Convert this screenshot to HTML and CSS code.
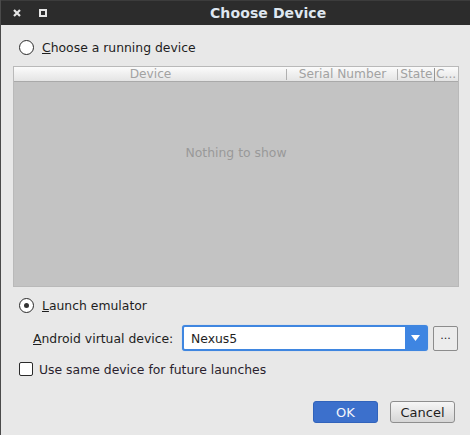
FILE: index.html
```html
<!DOCTYPE html>
<html>
<head>
<meta charset="utf-8">
<link rel="stylesheet" href="styles.css">
</head>
<body>
<div class="window">
  <div class="titlebar">
    <div class="tb-buttons">
      <svg class="tb-close" width="10" height="10" viewBox="0 0 10 10"><path d="M2 2 L8 8 M8 2 L2 8" stroke="#e6e6e6" stroke-width="2.2"/></svg>
      <svg class="tb-max" width="10" height="10" viewBox="0 0 10 10"><rect x="2" y="2" width="6" height="6" fill="none" stroke="#e6e6e6" stroke-width="2"/></svg>
    </div>
    <div class="title">Choose Device</div>
  </div>
  <div class="content">
    <label class="radio-row first">
      <span class="radio"></span>
      <span class="label"><u>C</u>hoose a running device</span>
    </label>
    <div class="table">
      <div class="thead">
        <div class="th c-device">Device</div>
        <div class="th c-serial">Serial Number</div>
        <div class="th c-state">State</div>
        <div class="th c-c">C...</div>
      </div>
      <div class="tbody">Nothing to show</div>
    </div>
    <label class="radio-row second">
      <span class="radio checked"></span>
      <span class="label"><u>L</u>aunch emulator</span>
    </label>
    <div class="avd-row">
      <span class="avd-label"><u>A</u>ndroid virtual device:</span>
      <div class="combo">
        <span class="combo-text">Nexus5</span>
        <span class="combo-arrow"><svg width="9" height="6" viewBox="0 0 9 6"><path d="M0 0 H9 L4.5 6 Z" fill="#fff"/></svg></span>
      </div>
      <div class="dots">...</div>
    </div>
    <label class="check-row">
      <span class="checkbox"></span>
      <span class="label">Use same device for future launches</span>
    </label>
    <div class="buttons">
      <button class="btn ok">OK</button>
      <button class="btn cancel">Cancel</button>
    </div>
  </div>
</div>
</body>
</html>
```
FILE: styles.css
```css
* { box-sizing: border-box; }
html, body { margin: 0; padding: 0; }
body {
  width: 470px;
  height: 435px;
  background: #e8e8e8;
  font-family: "DejaVu Sans", sans-serif;
  font-size: 12.4px;
  color: #1e1e1e;
  overflow: hidden;
}
.window {
  width: 470px;
  height: 435px;
  border-left: 1px solid #4a4a4a;
  display: flex;
  flex-direction: column;
}
.titlebar {
  height: 25px;
  background: #2c2c2c;
  border-top: 1px solid #3c3c3c;
  display: flex;
  align-items: center;
  position: relative;
}
.tb-buttons {
  display: flex;
  gap: 16px;
  padding-left: 11px;
  align-items: center;
}
.tb-buttons svg { display: block; }
.title {
  position: absolute;
  left: 209px;
  top: 4px;
  font-weight: bold;
  font-size: 14px;
  color: #dfe7f0;
  letter-spacing: 0.1px;
}
.content {
  flex: 1;
  display: flex;
  flex-direction: column;
  padding: 0 12px 0 12px;
}
.radio-row, .check-row {
  display: flex;
  align-items: center;
  gap: 8px;
  padding-left: 6px;
  height: 18px;
}
.radio-row.first { margin-top: 13px; }
.radio {
  width: 15px;
  height: 15px;
  border: 1px solid #2a2a2a;
  border-radius: 50%;
  background: #fff;
  display: flex;
  align-items: center;
  justify-content: center;
}
.radio.checked::after {
  content: "";
  width: 5px;
  height: 5px;
  border-radius: 50%;
  background: #333;
}
.label u, .avd-label u { text-decoration: underline; text-underline-offset: 1px; }
.table {
  margin-top: 10px;
  width: 446px;
  height: 221px;
  border: 1px solid #b9b9b9;
  display: flex;
  flex-direction: column;
}
.thead {
  height: 15px;
  display: flex;
  background: linear-gradient(#fbfbfb, #e4e4e4);
  border-bottom: 1px solid #a9a9a9;
  color: #a2a2a2;
  font-size: 12.2px;
  line-height: 14px;
}
.th {
  text-align: center;
  white-space: nowrap;
  overflow: hidden;
  position: relative;
}
.c-device::after, .c-serial::after, .c-state::after {
  content: "";
  position: absolute;
  right: 0;
  top: 2px;
  bottom: 1px;
  width: 1px;
  background: #b0b0b0;
}
.c-state::after { background: #959595; top: 1px; bottom: 0; }
.c-device { width: 273px; }
.c-serial { width: 111px; }
.c-state { width: 37px; }
.c-c { flex: 1; text-align: left; padding-left: 1px; }
.tbody {
  flex: 1;
  background: #c3c3c3;
  color: #999999;
  display: flex;
  justify-content: center;
  padding-top: 63px;
}
.radio-row.second { margin-top: 9px; }
.avd-row {
  display: flex;
  align-items: center;
  height: 26px;
  margin-top: 11px;
}
.avd-label { padding-left: 20px; width: 169px; }
.combo {
  width: 246px;
  height: 26px;
  border: 2px solid #3f86e0;
  border-radius: 3px;
  background: #fff;
  display: flex;
  align-items: center;
  box-shadow: 0 0 1px #8fb8ee;
}
.combo-text { flex: 1; padding-left: 7px; }
.combo-arrow {
  width: 21px;
  height: 100%;
  background: #3e85e2;
  display: flex;
  align-items: center;
  justify-content: center;
}
.combo-arrow svg { display: block; }
.dots {
  margin-left: 5px;
  width: 25px;
  height: 25px;
  border: 1px solid #8c8c8c;
  border-radius: 2px;
  background: #ececec;
  font-size: 11px;
  text-align: center;
  line-height: 17px;
}
.check-row { margin-top: 9px; gap: 6px; }
.checkbox {
  width: 14px;
  height: 14px;
  border: 1px solid #2a2a2a;
  border-radius: 2px;
  background: #fff;
}
.check-row .label { color: #2a1f2e; }
.buttons {
  display: flex;
  justify-content: flex-end;
  gap: 12px;
  margin-top: 23px;
  padding-right: 3px;
}
.btn {
  width: 65px;
  height: 22px;
  font-family: "DejaVu Sans", sans-serif;
  font-size: 13px;
  border-radius: 3px;
  padding: 0;
}
.ok {
  background: #3c70cc;
  border: 1px solid #3163bb;
  color: #f4f6fb;
}
.cancel {
  background: linear-gradient(#f6f6f6, #d6d6d6);
  border: 1px solid #8e8e8e;
  color: #1e1e1e;
}
```
